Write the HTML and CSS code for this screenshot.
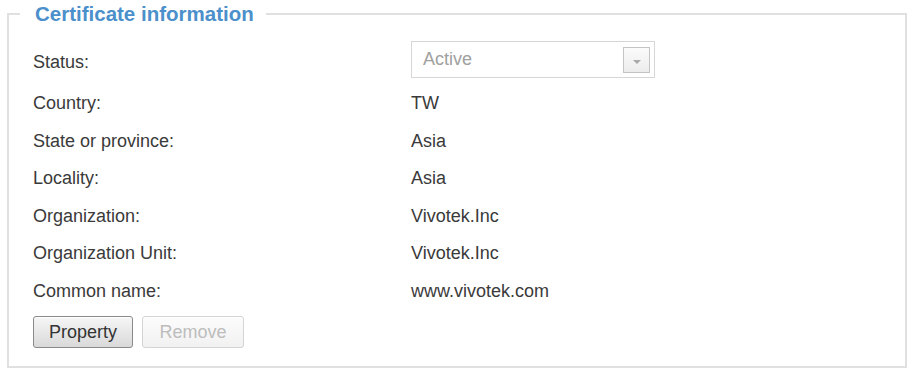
FILE: index.html
```html
<!DOCTYPE html>
<html lang="en">
<head>
    <meta charset="UTF-8">
    <title>Certificate information</title>
    <link rel="stylesheet" href="styles.css">
</head>
<body>
    <fieldset class="cert-box">
        <legend>Certificate information</legend>

        <div class="row status-row">
            <span class="label">Status:</span>
            <div class="select-box">
                <span>Active</span>
                <span class="select-arrow"><span class="tri"></span></span>
            </div>
        </div>
        <div class="row"><span class="label">Country:</span><span class="value">TW</span></div>
        <div class="row"><span class="label">State or province:</span><span class="value">Asia</span></div>
        <div class="row"><span class="label">Locality:</span><span class="value">Asia</span></div>
        <div class="row"><span class="label">Organization:</span><span class="value">Vivotek.Inc</span></div>
        <div class="row"><span class="label">Organization Unit:</span><span class="value">Vivotek.Inc</span></div>
        <div class="row"><span class="label">Common name:</span><span class="value">www.vivotek.com</span></div>

        <div class="buttons">
            <button class="btn">Property</button>
            <button class="btn disabled">Remove</button>
        </div>
    </fieldset>
</body>
</html>
```

FILE: styles.css
```css
/* General Layout */
body {
    font-family: "Liberation Sans", Arial, sans-serif;
    background-color: #fff;
    margin: 0;
    padding: 0;
    color: #3a3a3a;
}

/* Fieldset */
.cert-box {
    box-sizing: border-box;
    width: 900px;
    height: 366px;
    margin: 2px 0 0 7px;
    padding: 15px 24px 0 24px;
    border: 2px solid #e0e0e0;
    min-width: 0;
}

.cert-box legend {
    margin-left: -13px;
    padding: 0 12px 0 15px;
    font-size: 20.5px;
    font-weight: bold;
    line-height: 24px;
    color: #4b8fcb;
}

/* Rows */
.row {
    display: flex;
    align-items: center;
    height: 37.5px;
    font-size: 18px;
}

.status-row {
    height: 44px;
    align-items: flex-start;
}

.status-row .label {
    margin-top: 11px;
}

.label {
    width: 378px;
    flex-shrink: 0;
}

/* Select */
.select-box {
    box-sizing: border-box;
    display: flex;
    align-items: center;
    justify-content: space-between;
    width: 244px;
    height: 37px;
    padding: 0 4px 0 11px;
    border: 1px solid #d6d6d6;
    color: #a0a0a0;
    font-size: 18px;
}

.select-arrow {
    box-sizing: border-box;
    display: flex;
    align-items: center;
    justify-content: center;
    width: 27px;
    height: 26px;
    border: 1px solid #c4c4c4;
    background: linear-gradient(#fbfbfb, #ececec);
}

.tri {
    width: 0;
    height: 0;
    margin-top: 5px;
    border-left: 4px solid transparent;
    border-right: 4px solid transparent;
    border-top: 4px solid #a8a8a8;
}

/* Buttons */
.buttons {
    display: flex;
    gap: 9px;
    margin-top: 6px;
}

.btn {
    box-sizing: border-box;
    width: 100px;
    height: 32px;
    padding: 0;
    font-family: "Liberation Sans", Arial, sans-serif;
    font-size: 18px;
    color: #333;
    border: 1px solid #8a8a8a;
    border-radius: 3px;
    background: linear-gradient(#f6f6f6, #d9d9d9);
    box-shadow: inset 0 1px 0 #fff;
}

.btn.disabled {
    width: 102px;
    color: #bdbdbd;
    border-color: #d4d4d4;
    background: linear-gradient(#fcfcfc, #f1f1f1);
}
```
